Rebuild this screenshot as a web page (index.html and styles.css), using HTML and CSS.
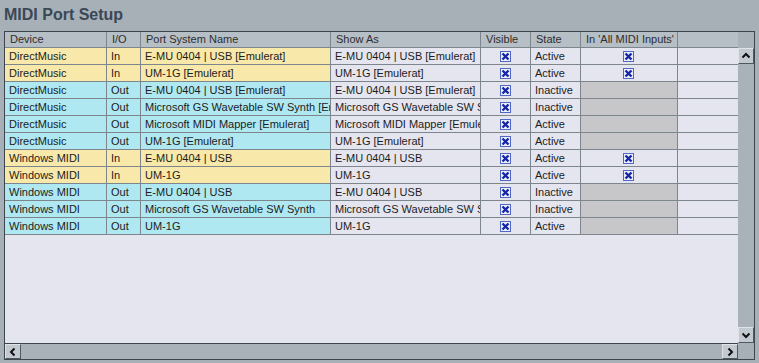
FILE: index.html
```html
<!DOCTYPE html>
<html>
<head>
<meta charset="utf-8">
<link rel="stylesheet" href="styles.css">
</head>
<body>
<h1 class="title">MIDI Port Setup</h1>
<div class="frame">
  <div class="main">
    <div class="grid">
      <div class="hd">Device</div>
      <div class="hd">I/O</div>
      <div class="hd">Port System Name</div>
      <div class="hd">Show As</div>
      <div class="hd">Visible</div>
      <div class="hd">State</div>
      <div class="hd">In 'All MIDI Inputs'</div>
      <div class="hd hd-last"></div>

      <div class="c in">DirectMusic</div><div class="c in">In</div><div class="c in">E-MU 0404 | USB [Emulerat]</div><div class="c">E-MU 0404 | USB [Emulerat]</div><div class="c ck"><span class="box"><svg viewBox="0 0 9 9"><path d="M1.5 1.5L7.5 7.5M7.5 1.5L1.5 7.5"/></svg></span></div><div class="c">Active</div><div class="c ck"><span class="box"><svg viewBox="0 0 9 9"><path d="M1.5 1.5L7.5 7.5M7.5 1.5L1.5 7.5"/></svg></span></div><div class="c last"></div>

      <div class="c in">DirectMusic</div><div class="c in">In</div><div class="c in">UM-1G [Emulerat]</div><div class="c">UM-1G [Emulerat]</div><div class="c ck"><span class="box"><svg viewBox="0 0 9 9"><path d="M1.5 1.5L7.5 7.5M7.5 1.5L1.5 7.5"/></svg></span></div><div class="c">Active</div><div class="c ck"><span class="box"><svg viewBox="0 0 9 9"><path d="M1.5 1.5L7.5 7.5M7.5 1.5L1.5 7.5"/></svg></span></div><div class="c last"></div>

      <div class="c out">DirectMusic</div><div class="c out">Out</div><div class="c out">E-MU 0404 | USB [Emulerat]</div><div class="c">E-MU 0404 | USB [Emulerat]</div><div class="c ck"><span class="box"><svg viewBox="0 0 9 9"><path d="M1.5 1.5L7.5 7.5M7.5 1.5L1.5 7.5"/></svg></span></div><div class="c">Inactive</div><div class="c na"></div><div class="c last"></div>

      <div class="c out">DirectMusic</div><div class="c out">Out</div><div class="c out">Microsoft GS Wavetable SW Synth [Emulerat]</div><div class="c">Microsoft GS Wavetable SW Synth [Emulerat]</div><div class="c ck"><span class="box"><svg viewBox="0 0 9 9"><path d="M1.5 1.5L7.5 7.5M7.5 1.5L1.5 7.5"/></svg></span></div><div class="c">Inactive</div><div class="c na"></div><div class="c last"></div>

      <div class="c out">DirectMusic</div><div class="c out">Out</div><div class="c out">Microsoft MIDI Mapper [Emulerat]</div><div class="c">Microsoft MIDI Mapper [Emulerat]</div><div class="c ck"><span class="box"><svg viewBox="0 0 9 9"><path d="M1.5 1.5L7.5 7.5M7.5 1.5L1.5 7.5"/></svg></span></div><div class="c">Active</div><div class="c na"></div><div class="c last"></div>

      <div class="c out">DirectMusic</div><div class="c out">Out</div><div class="c out">UM-1G [Emulerat]</div><div class="c">UM-1G [Emulerat]</div><div class="c ck"><span class="box"><svg viewBox="0 0 9 9"><path d="M1.5 1.5L7.5 7.5M7.5 1.5L1.5 7.5"/></svg></span></div><div class="c">Active</div><div class="c na"></div><div class="c last"></div>

      <div class="c in">Windows MIDI</div><div class="c in">In</div><div class="c in">E-MU 0404 | USB</div><div class="c">E-MU 0404 | USB</div><div class="c ck"><span class="box"><svg viewBox="0 0 9 9"><path d="M1.5 1.5L7.5 7.5M7.5 1.5L1.5 7.5"/></svg></span></div><div class="c">Active</div><div class="c ck"><span class="box"><svg viewBox="0 0 9 9"><path d="M1.5 1.5L7.5 7.5M7.5 1.5L1.5 7.5"/></svg></span></div><div class="c last"></div>

      <div class="c in">Windows MIDI</div><div class="c in">In</div><div class="c in">UM-1G</div><div class="c">UM-1G</div><div class="c ck"><span class="box"><svg viewBox="0 0 9 9"><path d="M1.5 1.5L7.5 7.5M7.5 1.5L1.5 7.5"/></svg></span></div><div class="c">Active</div><div class="c ck"><span class="box"><svg viewBox="0 0 9 9"><path d="M1.5 1.5L7.5 7.5M7.5 1.5L1.5 7.5"/></svg></span></div><div class="c last"></div>

      <div class="c out">Windows MIDI</div><div class="c out">Out</div><div class="c out">E-MU 0404 | USB</div><div class="c">E-MU 0404 | USB</div><div class="c ck"><span class="box"><svg viewBox="0 0 9 9"><path d="M1.5 1.5L7.5 7.5M7.5 1.5L1.5 7.5"/></svg></span></div><div class="c">Inactive</div><div class="c na"></div><div class="c last"></div>

      <div class="c out">Windows MIDI</div><div class="c out">Out</div><div class="c out">Microsoft GS Wavetable SW Synth</div><div class="c">Microsoft GS Wavetable SW Synth</div><div class="c ck"><span class="box"><svg viewBox="0 0 9 9"><path d="M1.5 1.5L7.5 7.5M7.5 1.5L1.5 7.5"/></svg></span></div><div class="c">Inactive</div><div class="c na"></div><div class="c last"></div>

      <div class="c out">Windows MIDI</div><div class="c out">Out</div><div class="c out">UM-1G</div><div class="c">UM-1G</div><div class="c ck"><span class="box"><svg viewBox="0 0 9 9"><path d="M1.5 1.5L7.5 7.5M7.5 1.5L1.5 7.5"/></svg></span></div><div class="c">Active</div><div class="c na"></div><div class="c last"></div>
    </div>
  </div>
  <div class="vscroll">
    <div class="vs-head"></div>
    <div class="btn"><svg viewBox="0 0 14 14"><path d="M3.5 8.5L7 5L10.5 8.5"/></svg></div>
    <div class="track"></div>
    <div class="btn"><svg viewBox="0 0 14 14"><path d="M3.5 5.5L7 9L10.5 5.5"/></svg></div>
  </div>
  <div class="hscroll">
    <div class="btn"><svg viewBox="0 0 14 14"><path d="M8.5 3.5L5 7L8.5 10.5"/></svg></div>
    <div class="track"></div>
    <div class="btn"><svg viewBox="0 0 14 14"><path d="M5.5 3.5L9 7L5.5 10.5"/></svg></div>
  </div>
  <div class="corner"></div>
</div>
</body>
</html>
```
FILE: styles.css
```css
html, body {
  margin: 0;
  padding: 0;
}
body {
  background: #a7afb7;
  width: 759px;
  height: 363px;
  overflow: hidden;
  padding: 6px 4px 0 4px;
  box-sizing: border-box;
  font-family: "Liberation Sans", Arial, sans-serif;
}
.title {
  margin: 0 0 7px 0;
  font-size: 16px;
  line-height: 18px;
  font-weight: bold;
  color: #3a4856;
}
.frame {
  width: 751px;
  box-sizing: border-box;
  border: 1px solid #3d454d;
  display: grid;
  grid-template-columns: 733px 16px;
  grid-template-rows: 311px 16px;
}
.main {
  background: #e5e5ef;
  overflow: hidden;
}
.grid {
  display: grid;
  grid-template-columns: 102px 34px 190px 150px 50px 50px 97px 60px;
  grid-auto-rows: 17px;
  grid-template-rows: 16px;
}
.hd, .c {
  box-sizing: border-box;
  border-right: 1px solid #7d858d;
  border-bottom: 1px solid #7d858d;
  font-size: 11px;
  line-height: 16px;
  padding-left: 4px;
  white-space: nowrap;
  overflow: hidden;
}
.hd {
  background: #b6bec6;
  color: #2e2e2e;
  line-height: 15px;
  padding-left: 5px;
}
.hd-last, .c.last {
  border-right: none;
}
.c {
  color: #1c1c1c;
}
.c.in {
  background: #f8e9aa;
}
.c.out {
  background: #afe8f1;
}
.c.na {
  background: #c7c7c9;
}
.c.ck {
  display: flex;
  align-items: center;
  justify-content: center;
  padding-left: 0;
  padding-right: 1px;
}
.box {
  width: 11px;
  height: 11px;
  box-sizing: border-box;
  border: 1px solid #5068c4;
  background: #eef0f8;
  display: flex;
}
.box svg {
  width: 9px;
  height: 9px;
}
.box path {
  stroke: #1626a8;
  stroke-width: 2.4;
  fill: none;
}
.vscroll {
  grid-row: 1 / 3;
  grid-column: 2;
  display: flex;
  flex-direction: column;
  background: #a9b1b9;
  height: 311px;
}
.vs-head {
  height: 16px;
  flex: none;
}
.track {
  flex: 1;
}
.btn {
  width: 16px;
  height: 16px;
  flex: none;
  box-sizing: border-box;
  background: #c3c9d0;
  border: 1px solid #4f575f;
  border-top-color: #dfe3e7;
  border-left-color: #dfe3e7;
  display: flex;
  align-items: center;
  justify-content: center;
}
.btn svg {
  width: 14px;
  height: 14px;
}
.btn path {
  stroke: #111;
  stroke-width: 2;
  fill: none;
}
.hscroll {
  grid-row: 2;
  grid-column: 1;
  display: flex;
  background: #a9b1b9;
  border-top: 1px solid #3d454d;
  box-sizing: border-box;
  height: 16px;
}
.hscroll .btn {
  height: 15px;
}
.corner {
  grid-row: 2;
  grid-column: 2;
  background: #a7afb7;
}
```
